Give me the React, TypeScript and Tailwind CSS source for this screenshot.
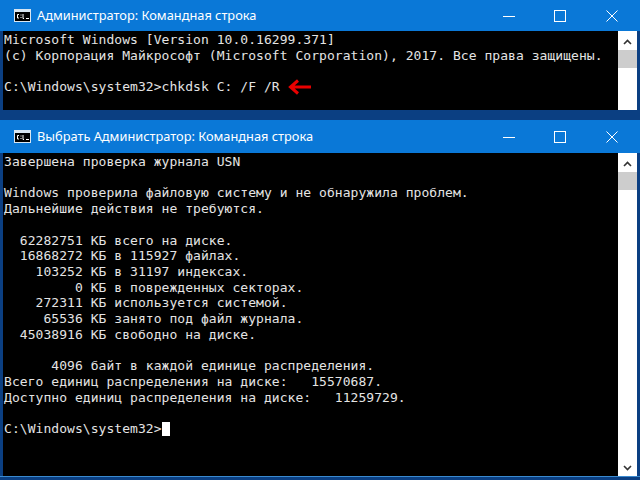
import React from 'react';

const style = {
  page: `w-[640px] h-[480px] overflow-hidden flex flex-col bg-[#0b3f82]`,
  titleBar: `flex items-center bg-[#0a78d7] text-white shrink-0`,
  titleText: `text-[12.8px] leading-none text-white whitespace-pre`,
  body: `flex flex-1 min-h-0 ml-[3px] mr-[3px]`,
  console: `flex-1 min-w-0 bg-black overflow-hidden pl-[1px] text-[13px] tracking-[0.05px] leading-[15.7px] text-[#e4e4e4] whitespace-pre`,
  scrollbar: `w-[19px] bg-white flex flex-col items-center shrink-0`,
  thumb: `w-[19px] h-[18px] bg-[#cdcdcd]`,
};

const mono = { fontFamily: '"DejaVu Sans Mono", monospace' };
const ui = { fontFamily: '"Noto Sans", sans-serif' };

const ConsoleIcon = () => (
  <svg width="17" height="13" viewBox="0 0 17 13" className="shrink-0">
    <rect x="0.5" y="0.5" width="16" height="12" fill="#000" stroke="#d8e6f2" />
    <rect x="1" y="1" width="15" height="2" fill="#d8e6f2" />
    <path d="M5 5.5H3.5V9H5M7 5.5v1M7 8v1M9 5v4.5H10M12 9.5h3" stroke="#fff" strokeWidth="1" fill="none" />
  </svg>
);

const WindowControls = () => (
  <div className="ml-auto flex items-center text-white">
    <svg width="12" height="12" viewBox="0 0 12 12" className="ml-0">
      <path d="M0 6.5H12" stroke="#fff" strokeWidth="1" />
    </svg>
    <svg width="12" height="12" viewBox="0 0 12 12" className="ml-[39px]">
      <rect x="0.5" y="0.5" width="11" height="11" fill="none" stroke="#fff" />
    </svg>
    <svg width="12" height="12" viewBox="0 0 12 12" className="ml-[40px] mr-[22px]">
      <path d="M0.5 0.5L11.5 11.5M11.5 0.5L0.5 11.5" stroke="#fff" strokeWidth="1" />
    </svg>
  </div>
);

const TitleBar = ({ title, height }: { title: string; height: string }) => (
  <div className={`${style.titleBar} ${height} pl-[14px]`}>
    <ConsoleIcon />
    <span className={`${style.titleText} ml-[6px]`} style={ui}>
      {title}
    </span>
    <WindowControls />
  </div>
);

const Up = () => (
  <svg width="9" height="6" viewBox="0 0 9 6" className="mt-[8px] mb-[5px]">
    <path d="M1 5L4.5 1.5L8 5" stroke="#333" strokeWidth="1.6" fill="none" />
  </svg>
);

const Down = () => (
  <svg width="9" height="6" viewBox="0 0 9 6" className="mt-auto mb-[5px]">
    <path d="M1 1L4.5 4.5L8 1" stroke="#333" strokeWidth="1.6" fill="none" />
  </svg>
);

const report = `Завершена проверка журнала USN

Windows проверила файловую систему и не обнаружила проблем.
Дальнейшие действия не требуются.

  62282751 КБ всего на диске.
  16868272 КБ в 115927 файлах.
    103252 КБ в 31197 индексах.
         0 КБ в поврежденных секторах.
    272311 КБ используется системой.
     65536 КБ занято под файл журнала.
  45038916 КБ свободно на диске.

      4096 байт в каждой единице распределения.
Всего единиц распределения на диске:   15570687.
Доступно единиц распределения на диске:   11259729.

C:\\Windows\\system32>`;

export default function App() {
  return (
    <div className={style.page}>
      <TitleBar title="Администратор: Командная строка" height="h-[31px]" />
      <div className="flex h-[79px] shrink-0 ml-[3px] mr-[3px]">
        <div className={`${style.console} pt-[1px]`} style={mono}>
          {`Microsoft Windows [Version 10.0.16299.371]
(c) Корпорация Майкрософт (Microsoft Corporation), 2017. Все права защищены.

C:\\Windows\\system32>chkdsk C: /F /R `}
          <svg width="24" height="16" viewBox="0 0 24 16" className="inline-block align-[0px] -my-[4px] ml-[0px]">
            <path d="M23 8H4M10 1.5L2.5 8L10 14.5" stroke="#e80000" strokeWidth="3" fill="none" />
          </svg>
        </div>
        <div className={style.scrollbar}>
          <Up />
          <div className={style.thumb} />
        </div>
      </div>
      <div className="h-[10px] shrink-0" />
      <TitleBar title="Выбрать Администратор: Командная строка" height="h-[33px]" />
      <div className={style.body}>
        <div className={`${style.console} pt-[1px]`} style={mono}>
          {report}
          <span className="inline-block w-[8px] h-[14px] bg-white align-[-3px]" />
        </div>
        <div className={style.scrollbar}>
          <Up />
          <div className={style.thumb} />
          <Down />
        </div>
      </div>
      <div className="h-[4px] shrink-0 border-t border-[#3a8ad0]" />
    </div>
  );
}
